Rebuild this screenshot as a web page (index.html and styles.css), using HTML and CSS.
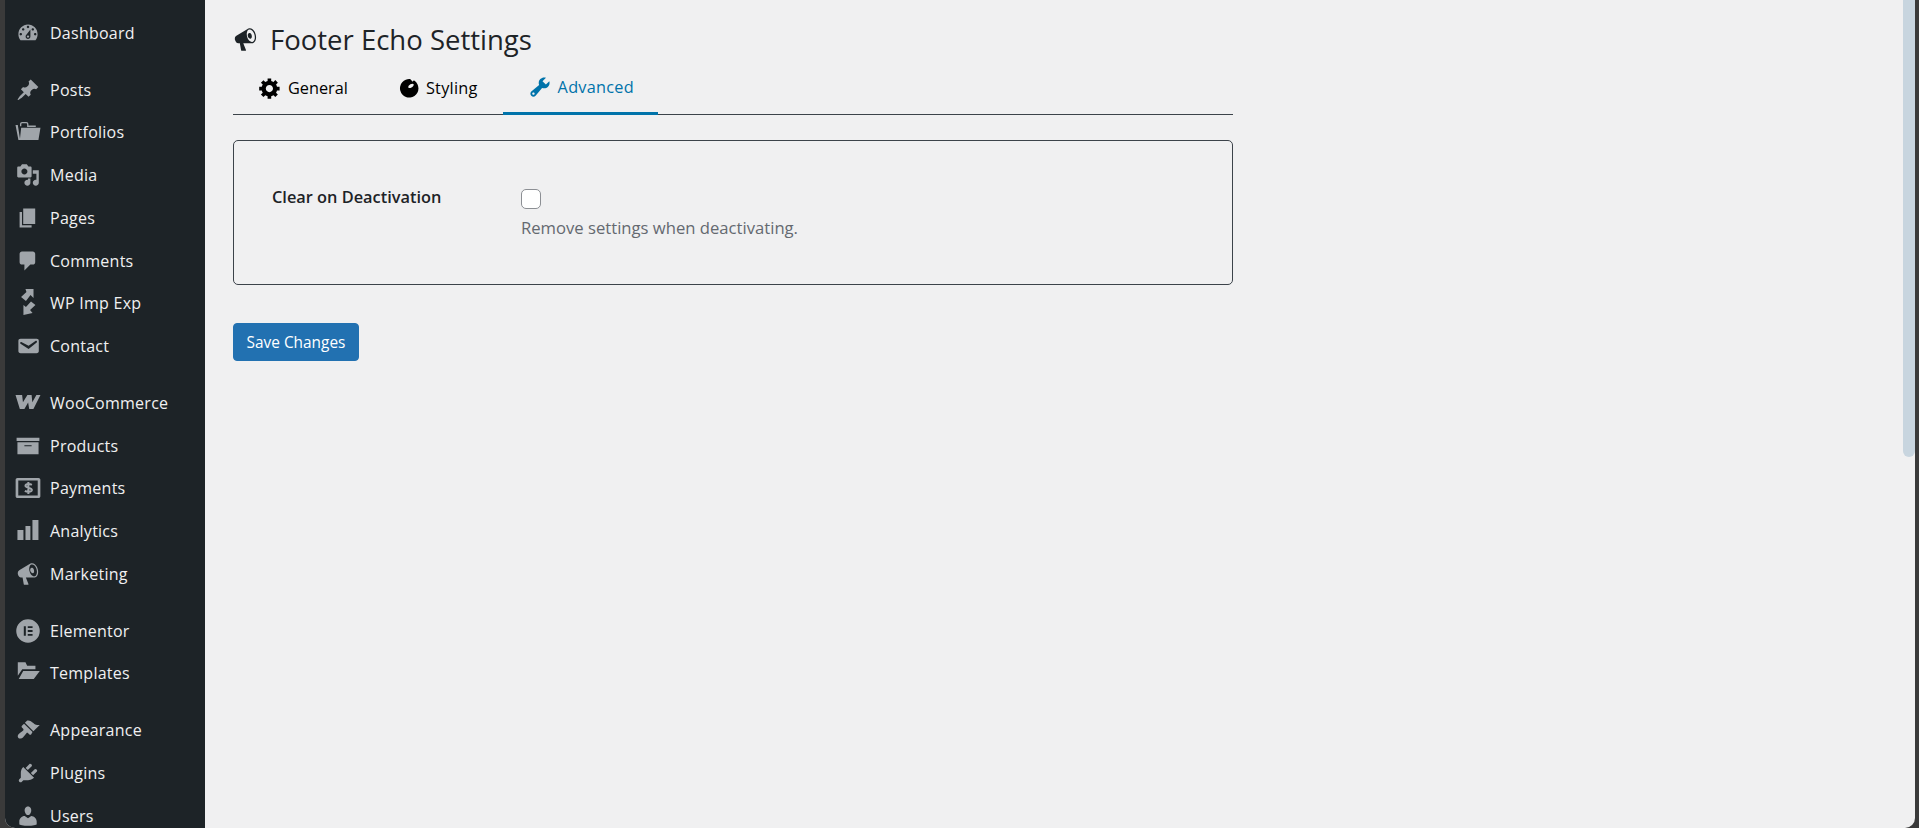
FILE: index.html
```html
<!DOCTYPE html>
<html lang="en">
<head>
<meta charset="utf-8">
<title>Footer Echo Settings</title>
<link rel="stylesheet" href="styles.css">
</head>
<body>
<div class="frame">
  <nav class="sidebar">
    <a class="item first"><svg class="ico" viewBox="0 0 20 20"><path d="M3.76 16h12.48c1.1-1.37 1.76-3.11 1.76-5 0-4.42-3.58-8-8-8s-8 3.58-8 8c0 1.89.66 3.63 1.76 5zM10 4c.55 0 1 .45 1 1s-.45 1-1 1-1-.45-1-1 .45-1 1-1zM6 6c.55 0 1 .45 1 1s-.45 1-1 1-1-.45-1-1 .45-1 1-1zm8 0c.55 0 1 .45 1 1s-.45 1-1 1-1-.45-1-1 .45-1 1-1zm-5.37 5.55L12 7v6c0 1.1-.9 2-2 2s-2-.9-2-2c0-.57.24-1.08.63-1.45zM4 10c.55 0 1 .45 1 1s-.45 1-1 1-1-.45-1-1 .45-1 1-1zm12 0c.55 0 1 .45 1 1s-.45 1-1 1-1-.45-1-1 .45-1 1-1zm-5 3c0-.55-.45-1-1-1s-1 .45-1 1 .45 1 1 1 1-.45 1-1z"/></svg>Dashboard</a>
    <a class="item sep"><svg class="ico" viewBox="0 0 20 20"><path d="M10.44 3.02l1.82-1.82 6.36 6.35-1.83 1.82c-1.05-.68-2.48-.57-3.41.36l-.75.75c-.92.93-1.04 2.35-.35 3.41l-1.83 1.82-2.41-2.41-2.8 2.79c-.42.42-3.38 2.71-3.8 2.29s1.86-3.39 2.28-3.81l2.79-2.79L4.1 9.36l1.83-1.82c1.05.69 2.48.57 3.4-.36l.75-.75c.93-.92 1.05-2.35.36-3.41z"/></svg>Posts</a>
    <a class="item"><svg class="ico" viewBox="0 0 20 20"><path d="M-.4 4.200h1.900l2 12.500H2zM4.300 6.400h16.100l-1.700 10.300H3.200z"/><path class="line" d="M3.900 5.200V3.400c0-.8.5-1.200 1.200-1.200h3.500c.7 0 1.200.4 1.200 1.200v1.800h6.700"/></svg>Portfolios</a>
    <a class="item"><svg class="ico" viewBox="0 0 20 20"><path d="M13 11V4c0-.55-.45-1-1-1h-1.670L9 1H5L3.670 3H2c-.55 0-1 .45-1 1v7c0 .55.45 1 1 1h10c.55 0 1-.45 1-1zM7 4.500c1.380 0 2.500 1.120 2.500 2.500S8.380 9.500 7 9.500 4.500 8.380 4.500 7 5.620 4.500 7 4.500zM14 6h5v10.500c0 1.380-1.120 2.500-2.500 2.500S14 17.880 14 16.500s1.120-2.500 2.500-2.500c.17 0 .34.02.5.05V9h-3V6zm-4 8.050V13h2v3.500c0 1.380-1.120 2.500-2.500 2.500S7 17.880 7 16.500 8.120 14 9.500 14c.17 0 .34.02.5.05z"/></svg>Media</a>
    <a class="item"><svg class="ico" viewBox="0 0 20 20"><path d="M6 15V2h10v13H6zm-1 1h8v2H3V5h2v11z"/></svg>Pages</a>
    <a class="item"><svg class="ico" viewBox="0 0 20 20"><path d="M5 2h9c1.100 0 2 .9 2 2v7c0 1.100-.9 2-2 2h-2l-5 5v-5H5c-1.100 0-2-.9-2-2V4c0-1.100.9-2 2-2z"/></svg>Comments</a>
    <a class="item"><svg class="ico" viewBox="0 0 20 20"><path d="M7.900-1.700h6.700v7.500l-2.500-2.500-3.800 5-4.100-3.300 4.500-4.200zM16.200 11.700l-4.500 4.100 2.100 2.500-7.600 1.700v-8.300l2.100 1.600 4.200-4.500z"/></svg>WP Imp Exp</a>
    <a class="item"><svg class="ico" viewBox="0 0 20 20"><path d="M3.870 4h13.250C18.370 4 19 4.590 19 5.790v8.420c0 1.190-.63 1.790-1.880 1.790H3.870c-1.250 0-1.880-.6-1.880-1.790V5.790c0-1.200.63-1.790 1.880-1.790zm6.620 8.600l6.740-5.530c.24-.2.43-.66.13-1.070-.29-.41-.82-.42-1.170-.17l-5.700 3.860L4.800 6.830c-.35-.25-.88-.24-1.170.17-.3.41-.11.87.13 1.070z"/></svg>Contact</a>
    <a class="item sep"><svg class="ico" viewBox="0 0 20 20"><path d="M-.4 3.300h5.500l.7 6 3.700-6H13l.6 6 3.400-6h3.400L14.500 15H11l-.9-5.500L7 15H3.200z"/></svg>WooCommerce</a>
    <a class="item"><svg class="ico" viewBox="0 0 20 20"><path fill-rule="evenodd" d="M.5 3.200h19v2.700H.5zM1.200 6.900h17.600v10H1.200zM7 9.300v1h6v-1z"/></svg>Products</a>
    <a class="item"><svg class="ico" viewBox="0 0 20 20"><path fill-rule="evenodd" d="M1.200 1.700h17.600c.8 0 1.500.7 1.500 1.500v13.600c0 .8-.7 1.500-1.500 1.500H1.200c-.8 0-1.500-.7-1.500-1.500V3.200c0-.8.7-1.500 1.500-1.500zm.7 2.100v12.400h16.200V3.800z"/><path class="dollar" d="M13.200 7.300c-1.200-.7-5-1.100-5.300.8-.3 2 5.600 1.300 5.300 3.700-.3 1.800-4.500 1.400-5.800.6M10.300 4.900v10.200"/></svg>Payments</a>
    <a class="item"><svg class="ico" viewBox="0 0 20 20"><path d="M1.200 9.200h5v8.300h-5zM7.900 5.800H12v11.700H7.900zM13.700.8h5v16.700h-5z"/></svg>Analytics</a>
    <a class="item"><svg class="ico" viewBox="0 0 20 20"><path d="M18.150 5.940c.46 1.620.38 3.220-.02 4.480-.42 1.280-1.260 2.180-2.300 2.480-.16.06-.26.06-.4.06-.06.02-.12.02-.18.02-.06.02-.14.02-.22.02H8.230l2.220 5.500c.02.14-.06.26-.14.34-.08.1-.24.16-.34.16H6.950c-.1 0-.26-.06-.34-.16-.08-.08-.16-.2-.14-.34l-1-5.500H4.250l-.02-.02c-.5.06-1.080-.18-1.540-.62s-.88-1.080-1.060-1.880c-.24-.8-.2-1.560-.02-2.200.18-.62.58-1.080 1.060-1.300l.02-.02 9-5.400c.1-.06.18-.1.24-.16.06-.04.14-.08.24-.12.16-.08.28-.12.5-.18 1.040-.3 2.240.1 3.220.98s1.840 2.240 2.260 3.860zm-2.580 5.980h-.02c.4-.1.74-.34 1.040-.7.58-.7.86-1.760.86-3.040-.02-.64-.1-1.300-.28-1.980-.34-1.360-1.020-2.500-1.780-3.240s-1.680-1.100-2.460-.88c-.82.22-1.400.96-1.700 2-.32 1.040-.28 2.360.06 3.720.38 1.360 1 2.500 1.800 3.240.78.74 1.620 1.100 2.480.88zm-2.540-7.080c.22-.04.42-.02.62.04.38.16.76.48 1.020 1s.42 1.200.42 1.780c0 .3-.04.56-.12.8-.18.48-.44.84-.86.94-.34.1-.8-.06-1.140-.34s-.7-.76-.94-1.280c-.22-.6-.3-1.220-.14-1.700.12-.56.56-1.140 1.140-1.240z"/></svg>Marketing</a>
    <a class="item sep"><svg class="ico" viewBox="0 0 20 20"><path fill-rule="evenodd" d="M10 .2a9.800 9.800 0 1 0 0 19.600A9.800 9.800 0 0 0 10 .2zM6.500 6h1.700v8H6.500zm3.300 0h4v1.600h-4zm0 3.200h4v1.600h-4zm0 3.200h4V14h-4z"/></svg>Elementor</a>
    <a class="item"><svg class="ico" viewBox="0 0 20 20"><path d="M1.500 1.100h6.400l1.400 2.800h6.900v3h-11l-3.700 5.400zM6 8.300h13.800L14.800 15H2.300z"/></svg>Templates</a>
    <a class="item sep"><svg class="ico" viewBox="0 0 20 20"><path d="M14.480 11.060L7.410 3.990l1.500-1.500c.5-.56 2.300-.47 3.510.32 1.210.8 1.430 1.280 2.910 2.100 1.180.64 2.450 1.260 4.450.85zm-.71.71L6.700 4.700 4.930 6.470c-.39.39-.39 1.020 0 1.410l1.060 1.060c.39.39.39 1.030 0 1.420-.6.6-1.430 1.110-2.210 1.690-.35.26-.7.53-1.010.84C1.430 13.710.96 15.560 1.980 16.580c1.020 1.030 2.870.56 4.190-.75.31-.31.58-.66.84-1.010.58-.78 1.090-1.610 1.690-2.210.39-.39 1.030-.39 1.420 0l1.060 1.060c.39.39 1.020.39 1.410 0z"/></svg>Appearance</a>
    <a class="item"><svg class="ico" viewBox="0 0 20 20"><path d="M13.110 4.360L9.870 7.600 8 5.730l3.240-3.240c.35-.34 1.050-.2 1.560.32.52.51.66 1.210.31 1.550zm-8 1.770l.91-1.120 9.010 9.010-1.190.84c-.71.71-2.630 1.160-3.820 1.160H6.140L4.900 17.260c-.59.59-1.540.59-2.120 0-.59-.58-.59-1.530 0-2.120l1.240-1.240v-3.880c0-1.130.4-3.190 1.090-3.890zm7.260 3.970l3.240-3.240c.34-.35 1.040-.21 1.550.31.52.51.66 1.210.31 1.550l-3.240 3.250z"/></svg>Plugins</a>
    <a class="item"><svg class="ico" viewBox="0 0 20 20"><path d="M10 9.250c-2.270 0-2.730-3.440-2.730-3.440C7 4.020 7.820 2 9.970 2c2.160 0 2.980 2.020 2.710 3.810 0 0-.41 3.440-2.680 3.440zm0 2.570L12.720 10c2.390 0 4.520 2.330 4.520 4.530v2.490s-3.650 1.130-7.240 1.130c-3.650 0-7.240-1.130-7.240-1.130v-2.490c0-2.250 1.940-4.480 4.470-4.480z"/></svg>Users</a>
  </nav>
  <main class="main">
    <div class="wrap">
      <h1 class="title"><svg class="title-ico" viewBox="0 0 20 20"><path d="M18.150 5.940c.46 1.620.38 3.220-.02 4.480-.42 1.280-1.260 2.180-2.300 2.480-.16.06-.26.06-.4.06-.06.02-.12.02-.18.02-.06.02-.14.02-.22.02H8.230l2.220 5.500c.02.14-.06.26-.14.34-.08.1-.24.16-.34.16H6.950c-.1 0-.26-.06-.34-.16-.08-.08-.16-.2-.14-.34l-1-5.500H4.250l-.02-.02c-.5.06-1.080-.18-1.540-.62s-.88-1.080-1.060-1.880c-.24-.8-.2-1.560-.02-2.200.18-.62.58-1.080 1.060-1.300l.02-.02 9-5.400c.1-.06.18-.1.24-.16.06-.04.14-.08.24-.12.16-.08.28-.12.5-.18 1.040-.3 2.240.1 3.220.98s1.840 2.240 2.260 3.860zm-2.580 5.980h-.02c.4-.1.74-.34 1.040-.7.58-.7.86-1.760.86-3.040-.02-.64-.1-1.300-.28-1.980-.34-1.360-1.020-2.500-1.780-3.240s-1.680-1.100-2.460-.88c-.82.22-1.400.96-1.700 2-.32 1.040-.28 2.360.06 3.720.38 1.360 1 2.500 1.800 3.240.78.74 1.620 1.100 2.480.88zm-2.540-7.080c.22-.04.42-.02.62.04.38.16.76.48 1.020 1s.42 1.200.42 1.780c0 .3-.04.56-.12.8-.18.48-.44.84-.86.94-.34.1-.8-.06-1.140-.34s-.7-.76-.94-1.280c-.22-.6-.3-1.220-.14-1.700.12-.56.56-1.140 1.140-1.240z"/></svg>Footer Echo Settings</h1>
      <div class="tabs">
        <a class="tab first-tab"><svg class="tab-ico" viewBox="0 0 20 20"><path d="M18 12h-2.180c-.17.7-.44 1.350-.81 1.930l1.540 1.540-2.100 2.100-1.540-1.540c-.58.36-1.230.63-1.910.79V19H8v-2.180c-.68-.16-1.330-.43-1.910-.79l-1.540 1.540-2.120-2.120 1.540-1.540c-.36-.58-.63-1.230-.79-1.910H1V9.030h2.170c.16-.7.44-1.350.8-1.940L2.430 5.550l2.100-2.100 1.540 1.540c.58-.37 1.240-.64 1.930-.81V2h3v2.180c.68.16 1.330.43 1.910.79l1.540-1.540 2.120 2.120-1.540 1.540c.36.59.64 1.240.8 1.940H18V12zm-8.500 1.500c1.660 0 3-1.340 3-3s-1.340-3-3-3-3 1.340-3 3 1.340 3 3 3z"/></svg>General</a>
        <a class="tab second-tab"><svg class="tab-ico" viewBox="0 0 20 20"><path fill-rule="evenodd" d="M11.800 2.600A7.700 7.700 0 1 0 15.500 4Q14.500 3.300 14 4.800 13 3.800 11.800 2.600zM10.400 9.700c-.5-.7.3-2 1.600-2.800 1.200-.7 2.400-.7 2.700 0 .3.700-.6 1.900-1.800 2.600-1.100.7-2.100.8-2.500.2z"/></svg>Styling</a>
        <a class="tab active"><svg class="tab-ico" viewBox="0 0 20 20"><path d="M16.680 9.770c-1.340 1.340-3.300 1.670-4.950.99l-5.410 6.520c-.99.99-2.590.99-3.580 0s-.99-2.590 0-3.570l6.520-5.420c-.68-1.650-.35-3.610.99-4.950 1.280-1.280 3.120-1.620 4.720-1.060l-2.890 2.890 2.820 2.820 2.860-2.870c.53 1.580.18 3.390-1.080 4.650zM3.810 16.210c.4.390 1.040.39 1.430 0 .4-.4.4-1.040 0-1.430-.39-.4-1.030-.4-1.430 0-.39.39-.39 1.030 0 1.430z"/></svg>Advanced</a>
      </div>
      <section class="card">
        <div class="label">Clear on Deactivation</div>
        <div class="field">
          <span class="check"></span>
          <p class="desc">Remove settings when deactivating.</p>
        </div>
      </section>
      <button class="save" type="button">Save Changes</button>
    </div>
    <div class="thumb"></div>
  </main>
</div>
</body>
</html>
```

FILE: styles.css
```css
* { box-sizing: border-box; }
html, body { margin: 0; height: 100%; overflow: hidden; }
body { background: #3a3a3a; font-family: "Open Sans", "Noto Sans", sans-serif; }
.frame {
  display: flex;
  height: 828px;
  margin: 0 4px 0 5px;
  border-radius: 0 0 10px 10px;
  overflow: hidden;
  background: #f0f0f1;
}
.sidebar {
  flex: 0 0 200px;
  background: #1d2327;
  color: #f0f0f1;
  font-size: 16px;
  letter-spacing: 0.25px;
  padding-top: 11.5px;
  overflow: hidden;
}
.item {
  display: flex;
  align-items: center;
  height: 42.75px;
  padding-left: 10.5px;
}
.item.sep { margin-top: 14px; }
.ico {
  flex: 0 0 24px;
  width: 24px;
  height: 24px;
  margin-right: 10.5px;
  fill: #a0a5aa;
  overflow: visible;
}
.ico .dollar { fill: none; stroke: #a0a5aa; stroke-width: 1.7; }
.ico .line { fill: none; stroke: #a0a5aa; stroke-width: 1.1; }
.main { flex: 1; position: relative; padding: 0 28px; }
.wrap { width: 1000px; }
.title {
  display: flex;
  align-items: center;
  margin: 0;
  padding-top: 19px;
  height: 60px;
  font-size: 27.5px;
  font-weight: 400;
  color: #1d2327;
}
.title-ico { width: 25px; height: 25px; margin-right: 12px; fill: #1d2327; }
.tabs {
  display: flex;
  height: 55px;
  border-bottom: 1px solid #3c434a;
}
.tab {
  display: flex;
  align-items: center;
  height: 55px;
  padding: 0 25px;
  font-size: 16.3px;
  color: #000;
}
.tab.first-tab { padding-right: 23px; }
.tab.second-tab { padding-right: 25.5px; letter-spacing: 0.25px; }
.tab-ico { width: 24px; height: 24px; margin-right: 6px; fill: #000; }
.tab.active {
  color: #0073aa;
  border-bottom: 3px solid #0073aa;
  padding: 2px 24.5px 0;
  letter-spacing: 0.25px;
}
.tab.active .tab-ico { fill: #0073aa; }
.card {
  display: flex;
  height: 145px;
  margin-top: 25px;
  padding: 43px 38px;
  border: 1px solid #3c434a;
  border-radius: 5px;
}
.label {
  flex: 0 0 249px;
  font-size: 16.35px;
  font-weight: 600;
  line-height: 26px;
  color: #1d2327;
}
.check {
  display: block;
  width: 20px;
  height: 20px;
  margin-top: 5px;
  background: #fff;
  border: 1px solid #8c8f94;
  border-radius: 5px;
}
.desc {
  margin: 8px 0 0;
  font-size: 16.65px;
  line-height: 22px;
  color: #646970;
}
.save {
  display: block;
  width: 126px;
  height: 38px;
  margin-top: 38px;
  padding: 1px 0 0;
  background: #2271b1;
  border: 1px solid #2271b1;
  border-radius: 4px;
  color: #fff;
  font: 15.4px "Open Sans", "Noto Sans", sans-serif;
}
.thumb {
  position: absolute;
  top: 0;
  right: 0;
  width: 12px;
  height: 457px;
  background: #c8d5df;
  border-radius: 0 0 6px 6px;
}
```
